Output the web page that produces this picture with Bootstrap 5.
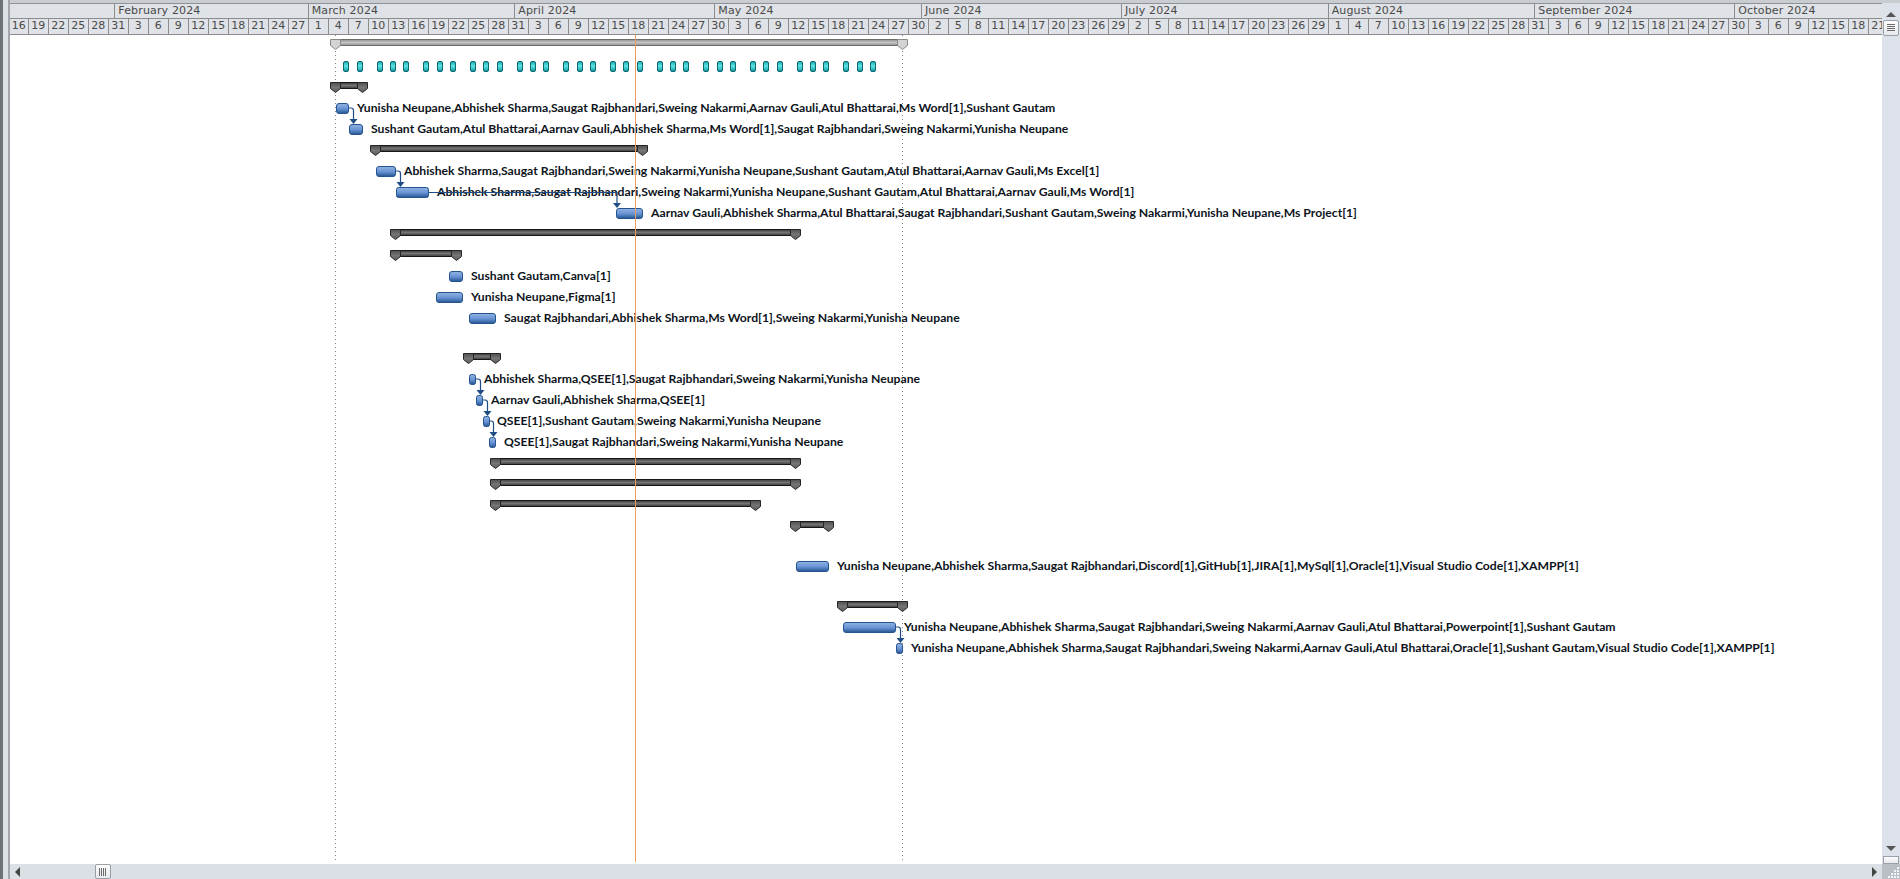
<!DOCTYPE html>
<html lang="en">
<head>
<meta charset="utf-8">
<title>Gantt chart</title>
<link href="https://cdn.jsdelivr.net/npm/bootstrap@5.3.0/dist/css/bootstrap.min.css" rel="stylesheet">
<style>
html,body{margin:0;height:879px;overflow:hidden;background:#fff}
.shell{width:1900px;height:879px;background:#dfe3e8}
.rail{width:10px;flex:none;background:linear-gradient(90deg,#6d7277 0 3px,#dde1e6 3px 8px,#a3a6aa 8px 10px)}
.work{width:1890px;flex:none;border-top:3px solid #c9cdd2}
.scale{height:32px;flex:none;width:1872px;overflow:hidden;background:#dfe2e6;border-top:1px solid #8e9297;font-family:"DejaVu Sans",sans-serif;font-size:11px;color:#4a4a4a;line-height:14px}
.scale-row{height:15px;border-bottom:1px solid #8c8c8c;box-sizing:border-box}
.scale-row+.scale-row{height:16px}
.mon{flex:none;border-right:1px solid #8c8c8c;padding-left:3px;box-sizing:border-box;white-space:nowrap;letter-spacing:.15px}
.w0{width:105.33px;padding:0}.w29{width:193.33px}.w30{width:200px}.w31{width:206.67px}.w32{width:160px;border-right:0}
.tick{flex:none;width:20px;text-align:center;border-right:1px solid #8c8c8c;box-sizing:border-box;white-space:nowrap}
.tick-first{width:18.67px}
.chart{width:1872px;height:829px;display:block;background:#fff}
.lbl{font-family:Lato,"Liberation Sans",sans-serif;font-weight:700;font-size:12.2px;fill:#0d1420}
.vbar{width:18px;flex:none;background:#dde1e9;height:861px;margin-top:0}
.hbar{height:15px;flex:none;background:#dbdfe6;width:1890px}
.grip-v{width:16px;height:16px;background:linear-gradient(#fdfdfd,#e6e8ec);border:1px solid #9aa0a8;border-radius:2px;margin:0 1px;display:flex;align-items:center;justify-content:center}
.grip-h{width:16px;height:15px;background:linear-gradient(#fdfdfd,#e6e8ec);border:1px solid #9aa0a8;border-radius:2px;margin-left:75px;display:flex;align-items:center;justify-content:center}
.tri-up,.tri-dn{width:0;height:0;border-left:5px solid transparent;border-right:5px solid transparent;margin:0 auto}
.tri-up{border-bottom:5px solid #555;margin-top:9px;margin-bottom:3px}
.tri-dn{border-top:5px solid #555;margin-top:auto;margin-bottom:5px}
.tri-l,.tri-r{width:0;height:0;border-top:5px solid transparent;border-bottom:5px solid transparent}
.tri-l{border-right:5px solid #444;margin-left:5px}
.tri-r{border-left:5px solid #444;margin-left:auto;margin-right:5px}
.stub{height:8px;background:linear-gradient(#fdfdfd,#e6e8ec);border:1px solid #9aa0a8;margin:0 1px}
.corner{width:18px;height:15px;flex:none;background:#b9bec6}
</style>
</head>
<body>
<div class="shell d-flex">
  <div class="rail"></div>
  <div class="work d-flex flex-column">
    <div class="d-flex flex-grow-1">
      <div class="d-flex flex-column">
        <div class="scale">
          <div class="scale-row d-flex">
            <div class="mon w0"></div><div class="mon w29">February 2024</div><div class="mon w31">March 2024</div><div class="mon w30">April 2024</div><div class="mon w31">May 2024</div><div class="mon w30">June 2024</div><div class="mon w31">July 2024</div><div class="mon w31">August 2024</div><div class="mon w30">September 2024</div><div class="mon w32">October 2024</div>
          </div>
          <div class="scale-row d-flex">
            <div class="tick tick-first">16</div><div class="tick">19</div><div class="tick">22</div><div class="tick">25</div><div class="tick">28</div><div class="tick">31</div><div class="tick">3</div><div class="tick">6</div><div class="tick">9</div><div class="tick">12</div><div class="tick">15</div><div class="tick">18</div><div class="tick">21</div><div class="tick">24</div><div class="tick">27</div><div class="tick">1</div><div class="tick">4</div><div class="tick">7</div><div class="tick">10</div><div class="tick">13</div><div class="tick">16</div><div class="tick">19</div><div class="tick">22</div><div class="tick">25</div><div class="tick">28</div><div class="tick">31</div><div class="tick">3</div><div class="tick">6</div><div class="tick">9</div><div class="tick">12</div><div class="tick">15</div><div class="tick">18</div><div class="tick">21</div><div class="tick">24</div><div class="tick">27</div><div class="tick">30</div><div class="tick">3</div><div class="tick">6</div><div class="tick">9</div><div class="tick">12</div><div class="tick">15</div><div class="tick">18</div><div class="tick">21</div><div class="tick">24</div><div class="tick">27</div><div class="tick">30</div><div class="tick">2</div><div class="tick">5</div><div class="tick">8</div><div class="tick">11</div><div class="tick">14</div><div class="tick">17</div><div class="tick">20</div><div class="tick">23</div><div class="tick">26</div><div class="tick">29</div><div class="tick">2</div><div class="tick">5</div><div class="tick">8</div><div class="tick">11</div><div class="tick">14</div><div class="tick">17</div><div class="tick">20</div><div class="tick">23</div><div class="tick">26</div><div class="tick">29</div><div class="tick">1</div><div class="tick">4</div><div class="tick">7</div><div class="tick">10</div><div class="tick">13</div><div class="tick">16</div><div class="tick">19</div><div class="tick">22</div><div class="tick">25</div><div class="tick">28</div><div class="tick">31</div><div class="tick">3</div><div class="tick">6</div><div class="tick">9</div><div class="tick">12</div><div class="tick">15</div><div class="tick">18</div><div class="tick">21</div><div class="tick">24</div><div class="tick">27</div><div class="tick">30</div><div class="tick">3</div><div class="tick">6</div><div class="tick">9</div><div class="tick">12</div><div class="tick">15</div><div class="tick">18</div><div class="tick">21</div>
          </div>
        </div>
        <svg class="chart" viewBox="10 35 1872 829" xmlns="http://www.w3.org/2000/svg">
          <defs>
            <linearGradient id="gb" x1="0" y1="0" x2="0" y2="1"><stop offset="0" stop-color="#93b3e2"/><stop offset=".5" stop-color="#6a95d4"/><stop offset=".8" stop-color="#416fae"/><stop offset="1" stop-color="#24528c"/></linearGradient>
            <linearGradient id="gt" x1="0" y1="0" x2="0" y2="1"><stop offset="0" stop-color="#18a5a8"/><stop offset=".45" stop-color="#5fe5e5"/><stop offset=".8" stop-color="#2cb5b8"/><stop offset="1" stop-color="#0c7f84"/></linearGradient>
            <linearGradient id="gs" x1="0" y1="0" x2="0" y2="1"><stop offset="0" stop-color="#3a3a3a"/><stop offset=".5" stop-color="#747474"/><stop offset="1" stop-color="#3a3a3a"/></linearGradient>
            <linearGradient id="gc" x1="0" y1="0" x2="0" y2="1"><stop offset="0" stop-color="#505050"/><stop offset=".5" stop-color="#757575"/><stop offset="1" stop-color="#5a5a5a"/></linearGradient>
            <linearGradient id="gp" x1="0" y1="0" x2="0" y2="1"><stop offset="0" stop-color="#909090"/><stop offset=".5" stop-color="#c4c4c4"/><stop offset="1" stop-color="#909090"/></linearGradient>
            <path id="cap" d="M.5.5h10v6l-5 4-5-4z" fill="url(#gc)" stroke="#262626"/>
            <path id="capl" d="M.5.5h10v6l-5 4-5-4z" fill="#d3d3d3" stroke="#8a8a8a"/>
            <rect id="tl" x=".5" y=".5" width="5" height="10" rx="1.500" fill="url(#gt)" stroke="#0d6a70"/>
            <path id="arw" d="M-4 0h8l-4 5z" fill="#1f4e86"/>
          </defs>

          <g stroke="#858585" stroke-dasharray="1 3"><path d="M335.500 35V862M902.500 35V862"/></g>

          <!-- project -->
          <rect x="336" y="39.500" width="566" height="6" fill="url(#gp)" stroke="#6c6c6c"/>
          <use href="#capl" x="330" y="39"/><use href="#capl" x="897" y="39"/>

          <!-- recurring meetings -->
          <g>
            <use href="#tl" x="343" y="61"/><use href="#tl" x="357" y="61"/>
            <use href="#tl" x="377" y="61"/><use href="#tl" x="390" y="61"/><use href="#tl" x="403" y="61"/>
            <use href="#tl" x="423" y="61"/><use href="#tl" x="437" y="61"/><use href="#tl" x="450" y="61"/>
            <use href="#tl" x="470" y="61"/><use href="#tl" x="483" y="61"/><use href="#tl" x="497" y="61"/>
            <use href="#tl" x="517" y="61"/><use href="#tl" x="530" y="61"/><use href="#tl" x="543" y="61"/>
            <use href="#tl" x="563" y="61"/><use href="#tl" x="577" y="61"/><use href="#tl" x="590" y="61"/>
            <use href="#tl" x="610" y="61"/><use href="#tl" x="623" y="61"/><use href="#tl" x="637" y="61"/>
            <use href="#tl" x="657" y="61"/><use href="#tl" x="670" y="61"/><use href="#tl" x="683" y="61"/>
            <use href="#tl" x="703" y="61"/><use href="#tl" x="717" y="61"/><use href="#tl" x="730" y="61"/>
            <use href="#tl" x="750" y="61"/><use href="#tl" x="763" y="61"/><use href="#tl" x="777" y="61"/>
            <use href="#tl" x="797" y="61"/><use href="#tl" x="810" y="61"/><use href="#tl" x="823" y="61"/>
            <use href="#tl" x="843" y="61"/><use href="#tl" x="857" y="61"/><use href="#tl" x="870" y="61"/>
          </g>

          <!-- summaries -->
          <g fill="url(#gs)" stroke="#161616">
            <rect x="336" y="82.500" width="26" height="6"/>
            <rect x="376" y="145.500" width="266" height="6"/>
            <rect x="396" y="229.500" width="400" height="6"/>
            <rect x="396" y="250.500" width="60" height="6"/>
            <rect x="469" y="353.500" width="26" height="6"/>
            <rect x="496" y="458.500" width="300" height="6"/>
            <rect x="496" y="479.500" width="300" height="6"/>
            <rect x="496" y="500.500" width="260" height="6"/>
            <rect x="796" y="521.500" width="32" height="6"/>
            <rect x="843" y="601.500" width="59" height="6"/>
          </g>
          <g>
            <use href="#cap" x="330" y="82"/><use href="#cap" x="357" y="82"/>
            <use href="#cap" x="370" y="145"/><use href="#cap" x="637" y="145"/>
            <use href="#cap" x="390" y="229"/><use href="#cap" x="790" y="229"/>
            <use href="#cap" x="390" y="250"/><use href="#cap" x="451" y="250"/>
            <use href="#cap" x="463" y="353"/><use href="#cap" x="490" y="353"/>
            <use href="#cap" x="490" y="458"/><use href="#cap" x="790" y="458"/>
            <use href="#cap" x="490" y="479"/><use href="#cap" x="790" y="479"/>
            <use href="#cap" x="490" y="500"/><use href="#cap" x="750" y="500"/>
            <use href="#cap" x="790" y="521"/><use href="#cap" x="823" y="521"/>
            <use href="#cap" x="837" y="601"/><use href="#cap" x="897" y="601"/>
          </g>

          <!-- labels -->
          <g>
            <text class="lbl" x="357" y="112">Yunisha Neupane,Abhishek Sharma,Saugat Rajbhandari,Sweing Nakarmi,Aarnav Gauli,Atul Bhattarai,Ms Word[1],Sushant Gautam</text>
            <text class="lbl" x="371" y="133">Sushant Gautam,Atul Bhattarai,Aarnav Gauli,Abhishek Sharma,Ms Word[1],Saugat Rajbhandari,Sweing Nakarmi,Yunisha Neupane</text>
            <text class="lbl" x="404" y="175">Abhishek Sharma,Saugat Rajbhandari,Sweing Nakarmi,Yunisha Neupane,Sushant Gautam,Atul Bhattarai,Aarnav Gauli,Ms Excel[1]</text>
            <text class="lbl" x="437" y="196">Abhishek Sharma,Saugat Rajbhandari,Sweing Nakarmi,Yunisha Neupane,Sushant Gautam,Atul Bhattarai,Aarnav Gauli,Ms Word[1]</text>
            <text class="lbl" x="651" y="217">Aarnav Gauli,Abhishek Sharma,Atul Bhattarai,Saugat Rajbhandari,Sushant Gautam,Sweing Nakarmi,Yunisha Neupane,Ms Project[1]</text>
            <text class="lbl" x="471" y="280">Sushant Gautam,Canva[1]</text>
            <text class="lbl" x="471" y="301">Yunisha Neupane,Figma[1]</text>
            <text class="lbl" x="504" y="322">Saugat Rajbhandari,Abhishek Sharma,Ms Word[1],Sweing Nakarmi,Yunisha Neupane</text>
            <text class="lbl" x="484" y="383">Abhishek Sharma,QSEE[1],Saugat Rajbhandari,Sweing Nakarmi,Yunisha Neupane</text>
            <text class="lbl" x="491" y="404">Aarnav Gauli,Abhishek Sharma,QSEE[1]</text>
            <text class="lbl" x="497" y="425">QSEE[1],Sushant Gautam,Sweing Nakarmi,Yunisha Neupane</text>
            <text class="lbl" x="504" y="446">QSEE[1],Saugat Rajbhandari,Sweing Nakarmi,Yunisha Neupane</text>
            <text class="lbl" x="837" y="570">Yunisha Neupane,Abhishek Sharma,Saugat Rajbhandari,Discord[1],GitHub[1],JIRA[1],MySql[1],Oracle[1],Visual Studio Code[1],XAMPP[1]</text>
            <text class="lbl" x="904" y="631">Yunisha Neupane,Abhishek Sharma,Saugat Rajbhandari,Sweing Nakarmi,Aarnav Gauli,Atul Bhattarai,Powerpoint[1],Sushant Gautam</text>
            <text class="lbl" x="911" y="652">Yunisha Neupane,Abhishek Sharma,Saugat Rajbhandari,Sweing Nakarmi,Aarnav Gauli,Atul Bhattarai,Oracle[1],Sushant Gautam,Visual Studio Code[1],XAMPP[1]</text>
          </g>

          <!-- links -->
          <g fill="none" stroke="#1f4e86" stroke-width="1.200">
            <path d="M349 108h2q2.500 0 2.500 2.500V120"/>
            <path d="M396 171h2q2.500 0 2.500 2.500V183"/>
            <path d="M429 192.500H617V204"/>
            <path d="M476 379h2q2.500 0 2.500 2.500V391"/>
            <path d="M483 400h2q2.500 0 2.500 2.500V412"/>
            <path d="M490 421h1q2.500 0 2.500 2.500V433"/>
            <path d="M896 627h2q2.500 0 2.500 2.500V639"/>
          </g>
          <use href="#arw" x="353.500" y="119"/><use href="#arw" x="400.500" y="182"/><use href="#arw" x="617" y="203"/>
          <use href="#arw" x="480.500" y="390"/><use href="#arw" x="487.500" y="411"/><use href="#arw" x="493.500" y="432"/><use href="#arw" x="900.500" y="638"/>

          <!-- tasks -->
          <g fill="url(#gb)" stroke="#24548f">
            <rect x="336.500" y="103.500" width="12" height="10" rx="2.500"/>
            <rect x="349.500" y="124.500" width="13" height="10" rx="2.500"/>
            <rect x="376.500" y="166.500" width="19" height="10" rx="2.500"/>
            <rect x="396.500" y="187.500" width="32" height="10" rx="2"/>
            <rect x="616.500" y="208.500" width="26" height="10" rx="2.500"/>
            <rect x="449.500" y="271.500" width="13" height="10" rx="2.500"/>
            <rect x="436.500" y="292.500" width="26" height="10" rx="2.500"/>
            <rect x="469.500" y="313.500" width="26" height="10" rx="2.500"/>
            <rect x="469.500" y="374.500" width="6" height="10" rx="2"/>
            <rect x="476.500" y="395.500" width="6" height="10" rx="2"/>
            <rect x="483.500" y="416.500" width="6" height="10" rx="2"/>
            <rect x="489.500" y="437.500" width="6" height="10" rx="2"/>
            <rect x="796.500" y="561.500" width="32" height="10" rx="2.500"/>
            <rect x="843.500" y="622.500" width="52" height="10" rx="2.500"/>
            <rect x="896.500" y="643.500" width="6" height="10" rx="2"/>
          </g>

          <path d="M635.500 35V862" stroke="#ec9c62" stroke-width="1"/>
        </svg>
      </div>
      <div class="vbar d-flex flex-column">
        <div class="tri-up"></div>
        <div class="grip-v"><svg width="10" height="8"><path d="M1 .5h8M1 2.500h8M1 4.500h8M1 6.500h8" stroke="#6a6a6a"/></svg></div>
        <div class="tri-dn"></div>
        <div class="stub"></div>
      </div>
    </div>
    <div class="hbar d-flex align-items-center">
      <div class="tri-l"></div>
      <div class="grip-h"><svg width="8" height="8"><path d="M.5 0v8M2.500 0v8M4.500 0v8M6.500 0v8" stroke="#6a6a6a"/></svg></div>
      <div class="tri-r"></div>
      <div class="corner d-flex align-items-end justify-content-end"><svg width="14" height="13"><g fill="#f4f5f7"><rect x="11" y="1" width="2" height="2"/><rect x="8" y="4" width="2" height="2"/><rect x="11" y="4" width="2" height="2"/><rect x="5" y="7" width="2" height="2"/><rect x="8" y="7" width="2" height="2"/><rect x="11" y="7" width="2" height="2"/><rect x="2" y="10" width="2" height="2"/><rect x="5" y="10" width="2" height="2"/><rect x="8" y="10" width="2" height="2"/><rect x="11" y="10" width="2" height="2"/></g></svg></div>
    </div>
  </div>
</div>
</body>
</html>
